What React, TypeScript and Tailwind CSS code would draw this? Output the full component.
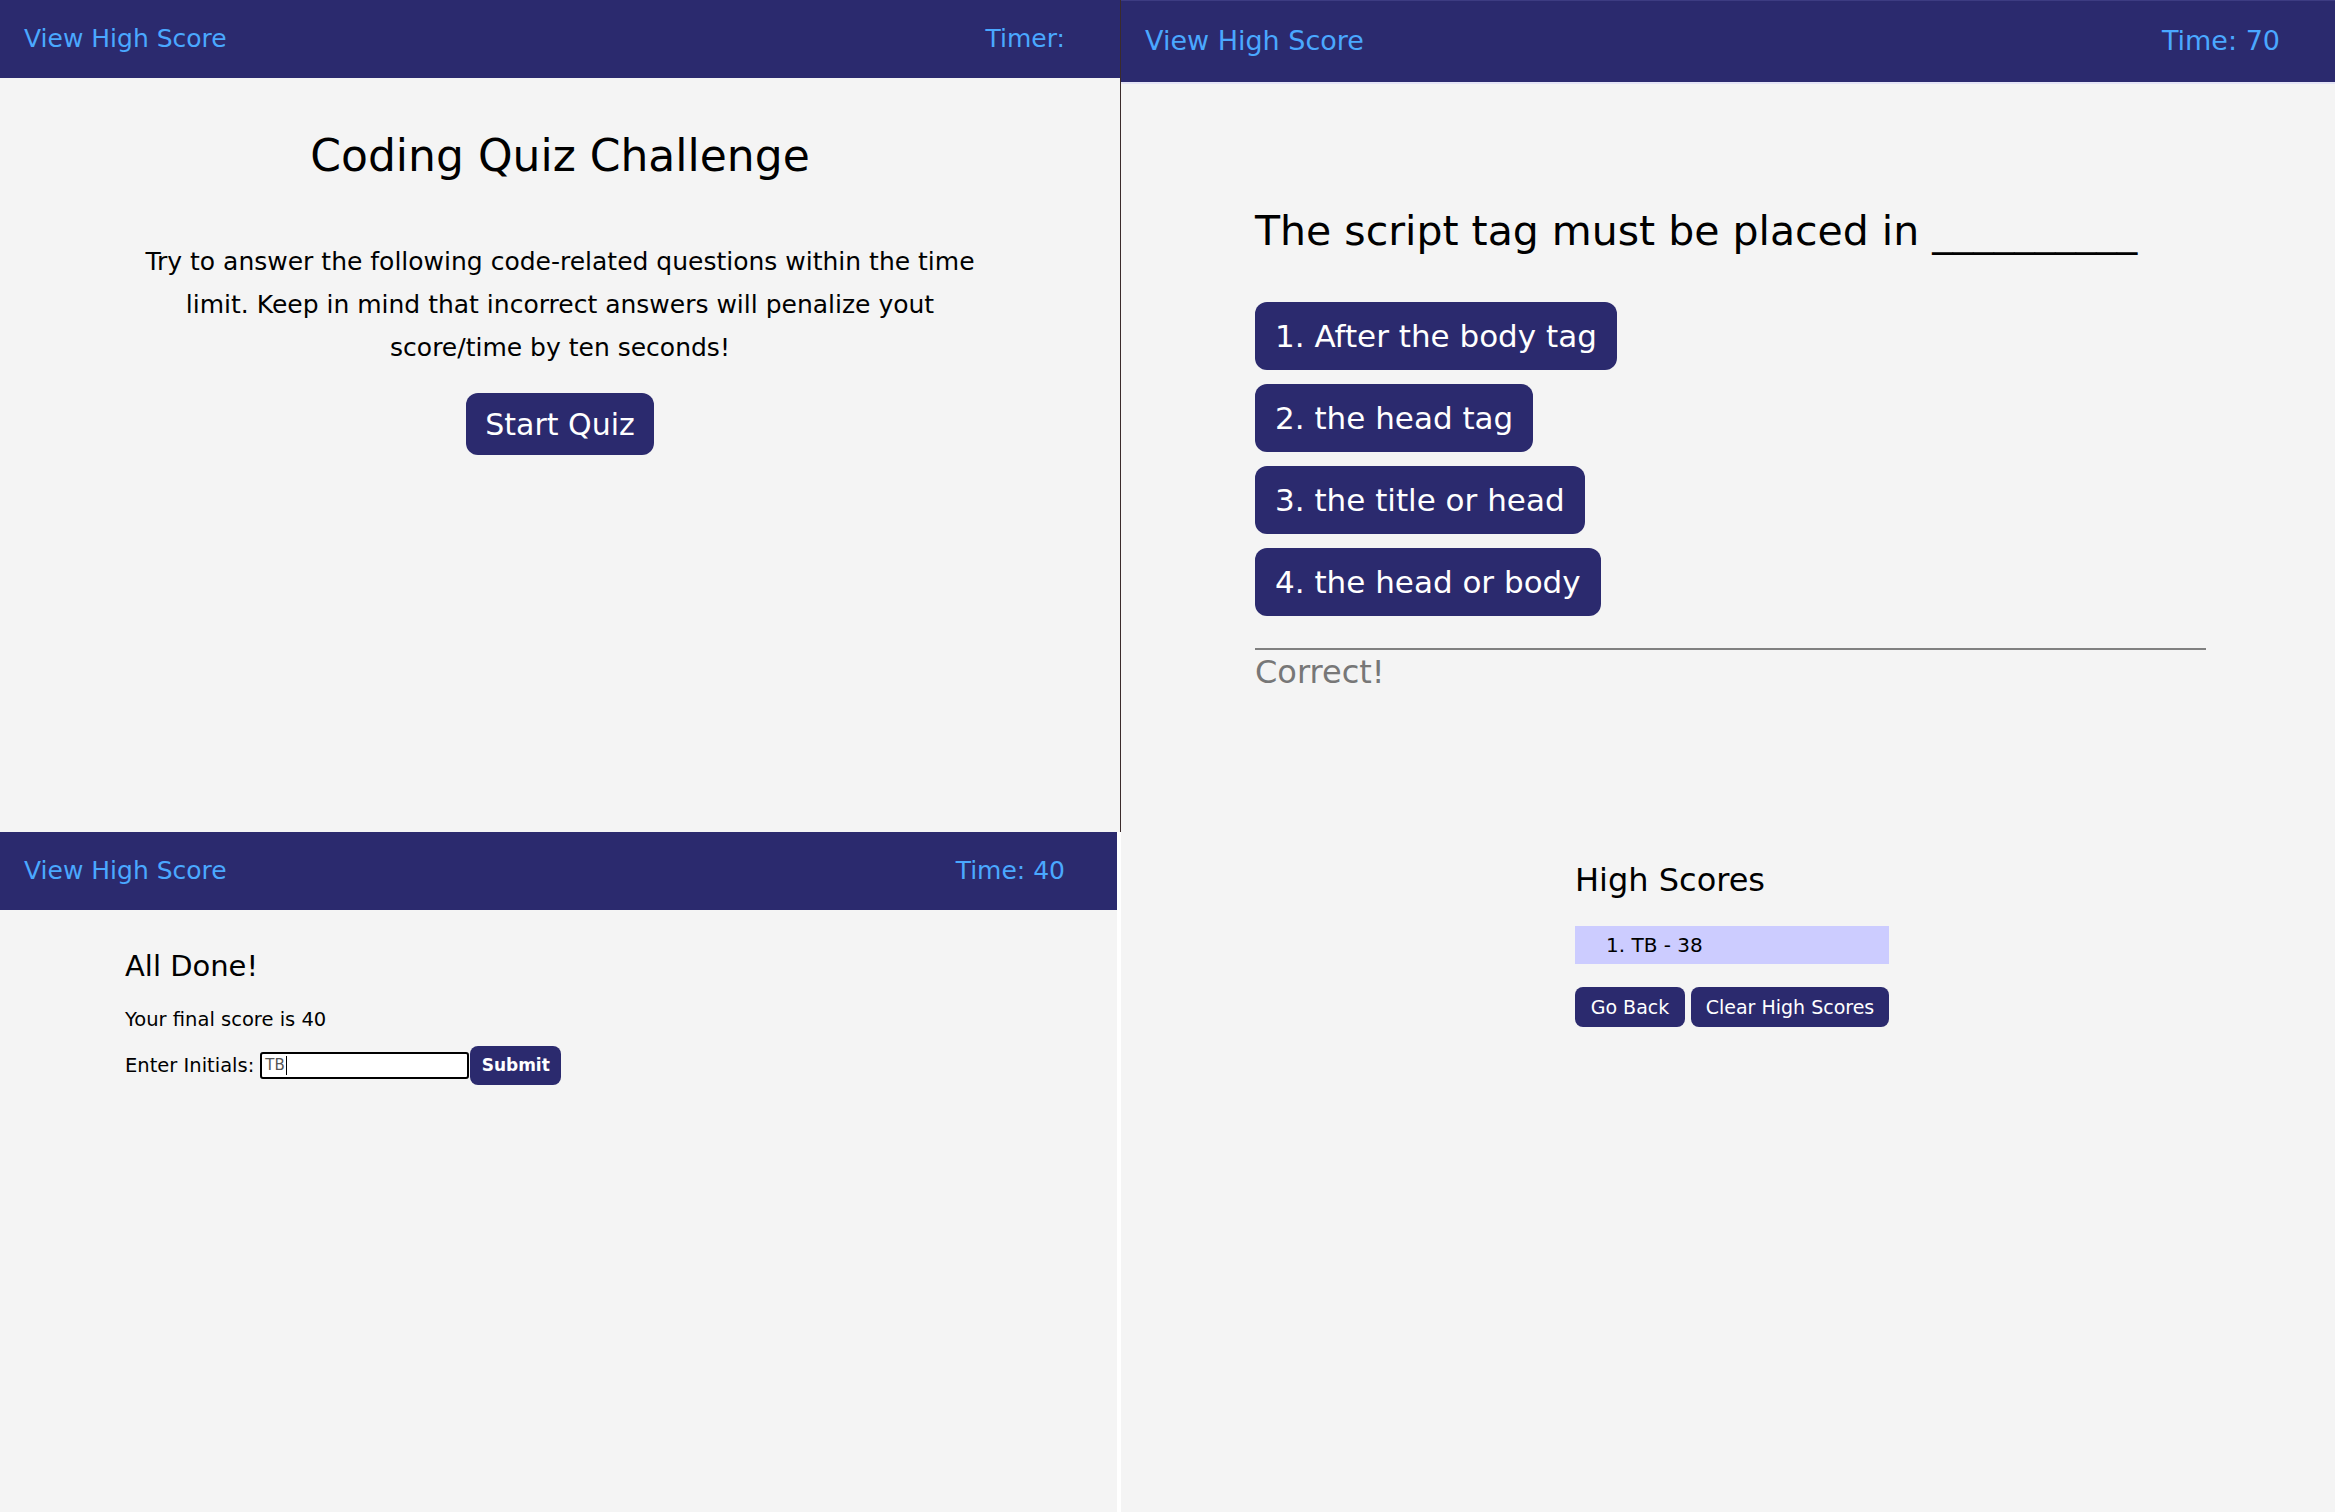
import React from 'react';

const answers = [
  '1. After the body tag',
  '2. the head tag',
  '3. the title or head',
  '4. the head or body',
];

function NavBar({ timer, className }: { timer: string; className: string }) {
  return (
    <header className={`flex items-center justify-between bg-[#2b2a6e] pl-6 text-[#4aa8ff] ${className}`}>
      <a href="#">View High Score</a>
      <span>{timer}</span>
    </header>
  );
}

export default function App() {
  return (
    <div className="flex h-[1512px] w-[2335px] overflow-hidden bg-[#f4f4f4] font-['DejaVu_Sans',sans-serif] text-black">
      {/* left column: start screen + final score screen */}
      <div className="flex w-[1121px] flex-col">
        <section className="h-[832px] border-r border-[#3b2b2b]">
          <NavBar timer="Timer:" className="h-[78px] pr-[55px] text-[25px]" />
          <h1 className="mt-[54px] text-center text-[44px] leading-[48px]">Coding Quiz Challenge</h1>
          <p className="mt-[60px] text-center text-[25px] leading-[43px]">
            Try to answer the following code-related questions within the time
            <br />
            limit. Keep in mind that incorrect answers will penalize yout
            <br />
            score/time by ten seconds!
          </p>
          <div className="mt-[24px] flex justify-center">
            <button className="h-[62px] rounded-[12px] bg-[#2b2a6e] px-[19px] text-[30px] text-white">Start Quiz</button>
          </div>
        </section>

        <section className="flex-1 border-r-4 border-white">
          <NavBar timer="Time: 40" className="h-[78px] pr-[52px] text-[25px]" />
          <div className="pl-[125px]">
            <h2 className="mt-[38px] text-[29px] leading-[36px]">All Done!</h2>
            <p className="mt-[24px] text-[19.5px] leading-[24px]">Your final score is 40</p>
            <div className="mt-[14px] flex items-center">
              <label className="text-[19.5px]">Enter Initials:</label>
              <div className="ml-[6px] flex h-[27px] w-[209px] items-center rounded-[3px] border-2 border-black bg-white pl-[3px] text-[15px] text-[#555]">
                TB<span className="ml-px h-[19px] w-px bg-black" />
              </div>
              <button className="ml-px h-[39px] w-[91px] rounded-[8px] bg-[#2b2a6e] text-[17px] font-bold text-white">Submit</button>
            </div>
          </div>
        </section>
      </div>

      {/* right column: question screen + high scores */}
      <div className="flex flex-1 flex-col">
        <NavBar timer="Time: 70" className="h-[84px] border-t border-b-2 border-t-[#3d3c82] border-b-[#e4e4f6] pr-[55px] text-[27px]" />
        <div className="pl-[134px]">
          <h2 className="mt-[122px] text-[41px] leading-[50px]">The script tag must be placed in __________</h2>
          <div className="mt-[46px] flex flex-col items-start gap-[14px]">
            {answers.map((answer) => (
              <button key={answer} className="h-[68px] rounded-[12px] bg-[#2b2a6e] px-[20px] text-[31px] text-white">
                {answer}
              </button>
            ))}
          </div>
          <div className="mt-[32px] h-[2px] w-[951px] bg-[#808080]" />
          <p className="mt-[4px] text-[32px] leading-[36px] text-[#777]">Correct!</p>

          <div className="ml-[320px] mt-[171px] w-[314px]">
            <h2 className="text-[32px] leading-[38px]">High Scores</h2>
            <div className="mt-[27px] flex h-[38px] items-center bg-[#ccccff] pl-[31px] text-[20px]">1. TB - 38</div>
            <div className="mt-[23px] flex gap-[6px]">
              <button className="h-[40px] w-[110px] rounded-[8px] bg-[#2b2a6e] text-[19px] text-white">Go Back</button>
              <button className="h-[40px] w-[198px] rounded-[8px] bg-[#2b2a6e] text-[19px] text-white">Clear High Scores</button>
            </div>
          </div>
        </div>
      </div>
    </div>
  );
}
